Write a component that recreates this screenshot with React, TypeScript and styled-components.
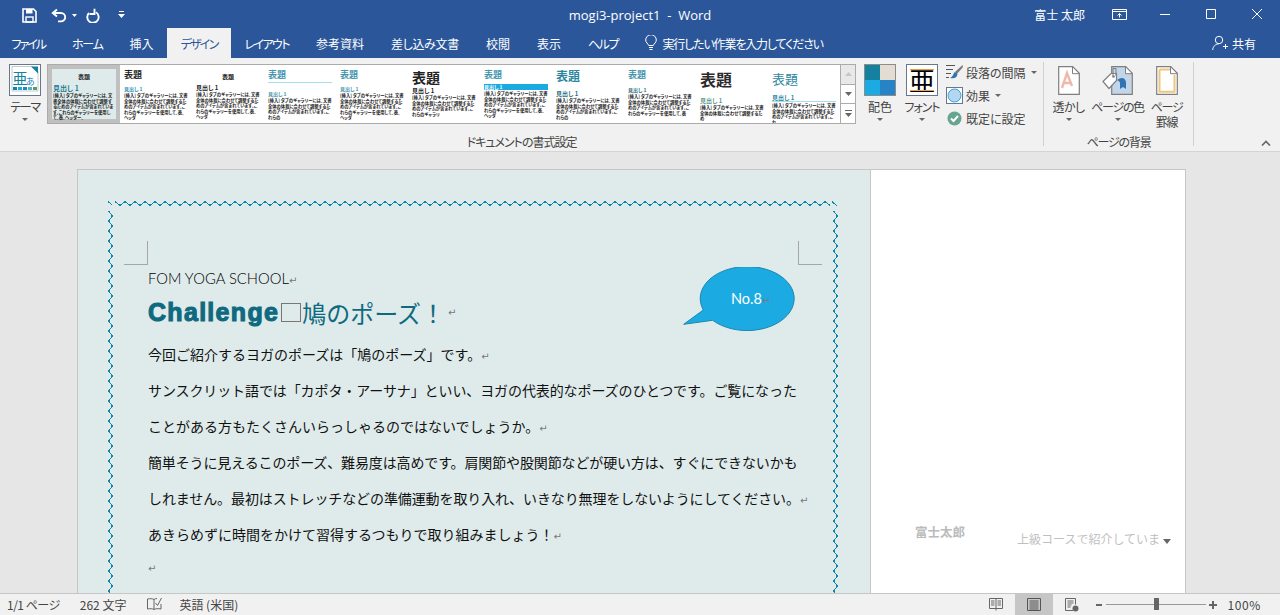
import React from "react";
import styled, { createGlobalStyle } from "styled-components";

const uiFont = `"Noto Sans CJK JP", sans-serif`;
const blue = "#2b579a";
const teal = "#0f6a80";

const sampleBody =
  "[挿入] タブのギャラリーには、文書全体の体裁に合わせて調整するためのアイテムが含まれています。これらのギャラリーを使用して、表、ヘッダー、フッター、リスト、表紙や、その他の文書パーツを挿入できます。";

interface Thumb {
  titleSize: number;
  titleColor: string;
  titleWeight?: number;
  center?: boolean;
  titleRule?: boolean;
  titleTop: number;
  headColor: string;
  headSize: number;
  headGap: number;
  band?: boolean;
  headRule?: boolean;
  selected?: boolean;
  chars: number;
}

const thumbs: Thumb[] = [
  { titleSize: 6, titleColor: "#222", titleWeight: 700, center: true, titleTop: 4, headColor: "#1b7a92", headSize: 7, headGap: 4, selected: true, chars: 70 },
  { titleSize: 9, titleColor: "#222", titleWeight: 700, titleTop: 1, headColor: "#2a8fb0", headSize: 5, headGap: 6, chars: 68 },
  { titleSize: 6, titleColor: "#111", titleWeight: 700, center: true, titleTop: 4, headColor: "#222", headSize: 6, headGap: 4, chars: 68 },
  { titleSize: 9, titleColor: "#3f93ad", titleWeight: 700, titleRule: true, titleTop: 1, headColor: "#3f93ad", headSize: 5, headGap: 8, chars: 52 },
  { titleSize: 9, titleColor: "#3f93ad", titleWeight: 700, titleTop: 1, headColor: "#3f93ad", headSize: 5, headGap: 6, chars: 68 },
  { titleSize: 14, titleColor: "#222", titleWeight: 700, titleTop: 1, headColor: "#222", headSize: 6, headGap: 2, chars: 56 },
  { titleSize: 9, titleColor: "#3f93ad", titleWeight: 700, titleTop: 1, headColor: "#fff", headSize: 5, headGap: 4, band: true, chars: 68 },
  { titleSize: 12, titleColor: "#2d86a0", titleWeight: 700, titleTop: 0, headColor: "#2d6f80", headSize: 6, headGap: 8, chars: 52 },
  { titleSize: 9, titleColor: "#3f93ad", titleWeight: 700, titleTop: 1, headColor: "#2d6f80", headSize: 5, headGap: 7, chars: 64 },
  { titleSize: 16, titleColor: "#2a2a2a", titleWeight: 700, titleTop: 2, headColor: "#5b9a8c", headSize: 6, headGap: 9, chars: 34 },
  { titleSize: 13, titleColor: "#2d86a0", titleWeight: 400, titleTop: 3, headColor: "#2d86a0", headSize: 6, headGap: 8, headRule: true, chars: 50 },
];

const tabs = [
  { label: "ファイル", tight: 2 },
  { label: "ホーム", tight: 1.3 },
  { label: "挿入", tight: 0 },
  { label: "デザイン", tight: 1.75 },
  { label: "レイアウト", tight: 1.6 },
  { label: "参考資料", tight: 0 },
  { label: "差し込み文書", tight: 0.3 },
  { label: "校閲", tight: 0 },
  { label: "表示", tight: 0 },
  { label: "ヘルプ", tight: 1.5 },
];

const bodyLines = [
  { text: "今回ご紹介するヨガのポーズは「鳩のポーズ」です。", mark: true, tight: 0 },
  { text: "サンスクリット語では「カポタ・アーサナ」といい、ヨガの代表的なポーズのひとつです。ご覧になった", mark: false, tight: 0.1 },
  { text: "ことがある方もたくさんいらっしゃるのではないでしょうか。", mark: true, tight: 0 },
  { text: "簡単そうに見えるこのポーズ、難易度は高めです。肩関節や股関節などが硬い方は、すぐにできないかも", mark: false, tight: 0.13 },
  { text: "しれません。最初はストレッチなどの準備運動を取り入れ、いきなり無理をしないようにしてください。", mark: true, tight: 0.1 },
  { text: "あきらめずに時間をかけて習得するつもりで取り組みましょう！", mark: true, tight: 0 },
];

const zigzagH = (y: number) => {
  const pts: string[] = [];
  for (let x = 115; x <= 832; x += 5) pts.push(`${x},${(x - 115) % 10 === 0 ? y : y + 4}`);
  return pts.join(" ");
};
const zigzagV = (x: number) => {
  const pts: string[] = [];
  for (let y = 211; y <= 600; y += 5) pts.push(`${(y - 211) % 10 === 0 ? x : x + 4},${y}`);
  return pts.join(" ");
};

const App = () => {
  return (
    <>
      <Global />
      <Window>
        <TitleBar>
          <Qat>
            <QatIcon $gap={0} width="15" height="15" viewBox="0 0 15 15">
              <path d="M1 1h10.500L14 3.500V14H1z" fill="none" stroke="#fff" strokeWidth="1.600" />
              <rect x="4" y="1" width="6.500" height="4.500" fill="#fff" />
              <rect x="4" y="9" width="7" height="5" fill="none" stroke="#fff" strokeWidth="1.400" />
            </QatIcon>
            <QatIcon $gap={14} width="16" height="15" viewBox="0 0 16 15">
              <path d="M6 1.500 1.800 5 6 8.500" fill="none" stroke="#fff" strokeWidth="1.900" />
              <path d="M2.500 5H10a4.200 4.200 0 0 1 0 8.400H7" fill="none" stroke="#fff" strokeWidth="1.900" />
            </QatIcon>
            <QatIcon $gap={5} width="5" height="3" viewBox="0 0 5 3">
              <path d="M0 0h5L2.500 3z" fill="#fff" />
            </QatIcon>
            <QatIcon $gap={9} width="14" height="15" viewBox="0 0 14 15">
              <path d="M10 4.300A5.700 5.700 0 1 1 3 5" fill="none" stroke="#fff" strokeWidth="1.900" />
              <path d="M8.500.8v5.200H3.500" fill="none" stroke="#fff" strokeWidth="1.900" />
            </QatIcon>
            <QatIcon $gap={18} width="7" height="8" viewBox="0 0 7 8">
              <rect x="1" y="0" width="5" height="1" fill="#fff" />
              <path d="M0 3h7L3.500 7z" fill="#fff" />
            </QatIcon>
          </Qat>
          <DocTitle>mogi3-project1&nbsp; -&nbsp; Word</DocTitle>
          <WindowControls>
            <UserName>富士 太郎</UserName>
            <WindowButton>
              <svg width="15" height="12" viewBox="0 0 15 12" fill="none" stroke="#fff">
                <path d="M.5 1.500h14v10H.5zM.5 3.500h14" />
                <path d="M7.500 9.500V5.500M5.500 7.500l2-2 2 2" />
              </svg>
            </WindowButton>
            <WindowButton>
              <svg width="10" height="10" viewBox="0 0 10 10" stroke="#fff">
                <path d="M0 5.500h10" />
              </svg>
            </WindowButton>
            <WindowButton>
              <svg width="10" height="10" viewBox="0 0 10 10" fill="none" stroke="#fff">
                <path d="M.5.500h9v9h-9z" />
              </svg>
            </WindowButton>
            <WindowButton>
              <svg width="10" height="10" viewBox="0 0 10 10" stroke="#fff">
                <path d="M0 0l10 10M10 0L0 10" />
              </svg>
            </WindowButton>
          </WindowControls>
        </TitleBar>

        <TabRow>
          {tabs.map((tab) => (
            <Tab key={tab.label} $active={tab.label === "デザイン"} $tight={tab.tight}>
              {tab.label}
            </Tab>
          ))}
          <TellMe>
            <svg width="12" height="16" viewBox="0 0 12 16" fill="none" stroke="#fff">
              <path d="M3.700 10.500C3 8.500.7 7.600.7 5a5.300 5.300 0 0 1 10.600 0c0 2.600-2.300 3.500-3 5.500zM4 12.500h4M4.500 14.500h3" />
            </svg>
            <TellMeText>実行したい作業を入力してください</TellMeText>
          </TellMe>
          <Share>
            <svg width="16" height="16" viewBox="0 0 16 16" fill="none" stroke="#fff">
              <circle cx="7" cy="5" r="3.700" />
              <path d="M.7 15c.3-3.500 2.500-6 6-6M11 11.500h5M13.500 9v5" />
            </svg>
            共有
          </Share>
        </TabRow>

        <Ribbon>
          <Group $width={1043}>
            <GroupBody>
              <LargeButton $width={32} $left={9}>
                <IconSlot>
                  <svg width="32" height="32" viewBox="0 0 32 32">
                    <rect x=".5" y=".5" width="31" height="31" fill="#fff" stroke="#66788f" />
                    <path d="M3 2.500h21l5 5V27H3z" fill="#fff" stroke="#9aa" strokeWidth=".6" />
                    <path d="M22 2.500h7v7z" fill="#14819f" />
                    <text x="3.500" y="20" fontSize="15" fill="#14819f" fontFamily={uiFont}>亜</text>
                    <text x="17" y="21" fontSize="9" fill="#2583c6" fontFamily={uiFont}>あ</text>
                    <rect x="4" y="23" width="4" height="3" fill="#14819f" />
                    <rect x="9" y="23" width="4" height="3" fill="#1caae2" />
                    <rect x="14" y="23" width="4" height="3" fill="#2583c6" />
                    <rect x="19" y="23" width="4" height="3" fill="#5fb0b8" />
                    <rect x="24" y="23" width="4" height="3" fill="#5b9a6c" />
                  </svg>
                </IconSlot>
                <ButtonLabel $tight={1.3}>テーマ</ButtonLabel>
                <DropArrow />
              </LargeButton>

              <Gallery>
                <GalleryItems>
                  {thumbs.map((thumb, i) => (
                    <ThumbCell key={i} $selected={thumb.selected}>
                      <ThumbPage $selected={thumb.selected}>
                        <ThumbTitle
                          $size={thumb.titleSize}
                          $color={thumb.titleColor}
                          $weight={thumb.titleWeight}
                          $center={thumb.center}
                          $rule={thumb.titleRule}
                          $top={thumb.titleTop}
                        >
                          表題
                        </ThumbTitle>
                        <ThumbHead
                          $size={thumb.headSize}
                          $color={thumb.headColor}
                          $gap={thumb.headGap}
                          $band={thumb.band}
                          $rule={thumb.headRule}
                        >
                          見出し 1
                        </ThumbHead>
                        <ThumbBody>{sampleBody.slice(0, thumb.chars)}</ThumbBody>
                      </ThumbPage>
                    </ThumbCell>
                  ))}
                </GalleryItems>
                <GalleryScroll>
                  <ScrollButton $disabled>
                    <svg width="7" height="4" viewBox="0 0 7 4"><path d="M0 4h7L3.500 0z" fill="#c6c6c6" /></svg>
                  </ScrollButton>
                  <ScrollButton>
                    <svg width="7" height="4" viewBox="0 0 7 4"><path d="M0 0h7L3.500 4z" fill="#666" /></svg>
                  </ScrollButton>
                  <ScrollButton>
                    <svg width="7" height="7" viewBox="0 0 7 7"><path d="M0 .5h7" stroke="#666" /><path d="M0 3h7L3.500 7z" fill="#666" /></svg>
                  </ScrollButton>
                </GalleryScroll>
              </Gallery>

              <LargeButton $width={32} $left={8}>
                <IconSlot>
                  <Swatches>
                    <Swatch $color="#14819f" />
                    <Swatch $color="#e2dcd2" />
                    <Swatch $color="#1caae2" />
                    <Swatch $color="#2583c6" />
                  </Swatches>
                </IconSlot>
                <ButtonLabel>配色</ButtonLabel>
                <DropArrow />
              </LargeButton>

              <LargeButton $width={32} $left={10}>
                <IconSlot>
                  <FontTile>亜</FontTile>
                </IconSlot>
                <ButtonLabel $tight={1}>フォント</ButtonLabel>
                <DropArrow />
              </LargeButton>

              <Commands>
                <CommandRow>
                  <svg width="17" height="17" viewBox="0 0 17 17">
                    <path d="M0 1.500h9M0 5.500h7M0 9.500h5M0 13.500h3" stroke="#555" />
                    <path d="M16.500 1 9 8l2 2 6-7z" fill="#7a7a7a" />
                    <path d="M9 8c-2 1-1 4-5 6 4 1 7 0 7.500-4z" fill="#2f75b5" />
                  </svg>
                  段落の間隔
                  <MiniArrow />
                </CommandRow>
                <CommandRow>
                  <svg width="17" height="17" viewBox="0 0 17 17">
                    <rect x=".5" y=".5" width="16" height="16" fill="#fff" stroke="#66788f" />
                    <circle cx="8.500" cy="8.500" r="6.500" fill="#b4d6f0" stroke="#38a3dc" />
                  </svg>
                  効果
                  <MiniArrow />
                </CommandRow>
                <CommandRow>
                  <svg width="17" height="17" viewBox="0 0 17 17">
                    <circle cx="8.500" cy="8.500" r="7" fill="#67a591" />
                    <path d="M5 8.500l2.500 2.500L12 6" fill="none" stroke="#fff" strokeWidth="2" />
                  </svg>
                  既定に設定
                </CommandRow>
              </Commands>
            </GroupBody>
            <GroupLabel $tight={1}>ドキュメントの書式設定</GroupLabel>
          </Group>
          <Separator />
          <Group $width={149}>
            <GroupBody>
              <LargeButton $width={49}>
                <IconSlot>
                  <svg width="22" height="29" viewBox="0 0 22 29" fill="none">
                    <path d="M.7.700h14l6.600 6.600v21H.7z" fill="#fff" stroke="#7f7f7f" strokeWidth="1.200" />
                    <path d="M14.500.700v7h6.800" stroke="#7f7f7f" />
                    <path d="M4 22l5-15 5 13M6 17h7" stroke="#eeb9ad" strokeWidth="2.400" />
                  </svg>
                </IconSlot>
                <ButtonLabel $tight={0.6}>透かし</ButtonLabel>
                <DropArrow />
              </LargeButton>
              <LargeButton $width={49}>
                <IconSlot>
                  <svg width="31" height="29" viewBox="0 0 31 29" fill="none">
                    <path d="M9.700.700h14l6.600 6.600v21h-20.600z" fill="#c3d6e9" stroke="#7f7f7f" strokeWidth="1.200" />
                    <path d="M23.500.700v7h6.800z" fill="#fff" stroke="#7f7f7f" />
                    <path d="M15 14c4-3 8-3 9 2v7l-3-2-3 2v-6c0-1-1-2-3-3z" fill="#2f75b5" />
                    <path d="M1 15.500l8-8h5.500v7l-7.500 8z" fill="#fff" stroke="#7f7f7f" strokeWidth="1.200" />
                    <path d="M11 10V2.500h3V10" stroke="#7f7f7f" />
                    <circle cx="11.500" cy="10.500" r="1.300" fill="#7f7f7f" />
                  </svg>
                </IconSlot>
                <ButtonLabel $tight={1.3}>ページの色</ButtonLabel>
                <DropArrow />
              </LargeButton>
              <LargeButton $width={49}>
                <IconSlot>
                  <svg width="22" height="29" viewBox="0 0 22 29" fill="none">
                    <path d="M.7.700h14l6.600 6.600v21H.7z" fill="#fff" stroke="#7f7f7f" strokeWidth="1.200" />
                    <path d="M14.500.700v7h6.800" stroke="#7f7f7f" />
                    <path d="M3.500 3.500h10.500M3.500 3.500v22.200h15V9" stroke="#eec77f" strokeWidth="2" />
                  </svg>
                </IconSlot>
                <ButtonLabel $tight={1.3}>
                  ページ
                  <br />
                  罫線
                </ButtonLabel>
              </LargeButton>
            </GroupBody>
            <GroupLabel $tight={1.2}>ページの背景</GroupLabel>
          </Group>
          <Separator />
          <Collapse>
            <svg width="10" height="6" viewBox="0 0 10 6" fill="none" stroke="#666" strokeWidth="1.600">
              <path d="M1 5.500l4-4 4 4" />
            </svg>
          </Collapse>
        </Ribbon>

        <Workspace>
          <Page>
            <Document>
              <BorderArt width="792" height="423" viewBox="78 170 792 423">
                <g fill="none" stroke="#0f86a8" shapeRendering="crispEdges">
                  <polyline points="108,201.5 112.500,205.500" />
                  <polyline points={zigzagH(201.5)} />
                  <polyline points="832,201.5 837.500,206.500" />
                  <polyline points={zigzagV(108.5)} />
                  <polyline points={zigzagV(833.5)} />
                </g>
              </BorderArt>
              <CropMark $side="left" />
              <CropMark $side="right" />
              <Balloon>
                <svg width="116" height="68" viewBox="0 0 116 68">
                  <path
                    d="M20.300 43A47 32 0 1 1 29.700 53.300L.7 57.300Z"
                    fill="#1caae2"
                    stroke="#1b87b2"
                  />
                </svg>
                <BalloonText>
                  No.8<Return>↵</Return>
                </BalloonText>
              </Balloon>
              <SchoolLine>
                FOM YOGA SCHOOL<Return>↵</Return>
              </SchoolLine>
              <Heading>
                <HeadingLatin>Challenge</HeadingLatin>
                <Tofu />
                <HeadingJa>鳩のポーズ！</HeadingJa>
                <Return>↵</Return>
              </Heading>
              {bodyLines.map((line) => (
                <BodyLine key={line.text} $tight={line.tight}>
                  {line.text}
                  {line.mark && <Return>↵</Return>}
                </BodyLine>
              ))}
              <EmptyLine>
                <Return>↵</Return>
              </EmptyLine>
            </Document>
            <MarginPane>
              <Author>富士太郎</Author>
              <Note>
                上級コースで紹介していま
                <NoteArrow />
              </Note>
            </MarginPane>
          </Page>
        </Workspace>

        <StatusBar>
          <StatusItem $tight={0.5}>1/1 ページ</StatusItem>
          <StatusItem $left={20}>262 文字</StatusItem>
          <StatusItem $left={21}>
            <svg width="15" height="15" viewBox="0 0 15 15" fill="none" stroke="#666">
              <path d="M7 2.500C5.500 1.500 3 1.500 .5 2v10c2.500-.5 5-.5 6.500.5zM7 2.500c1-.7 2-1 3-1M7 12.500c1.500-1 4-1 7-.5V7" />
              <path d="M8.500 6l2 2.500L14.500 1" />
            </svg>
          </StatusItem>
          <StatusItem $left={17}>英語 (米国)</StatusItem>
          <ViewControls>
            <ViewButton>
              <svg width="14" height="13" viewBox="0 0 14 13" fill="none" stroke="#666">
                <path d="M.5.500h13v10h-13zM7 .5v12M2 3h3.500M2 5h3.500M2 7h3.500M8.500 3H12M8.500 5H12M8.500 7H12" />
              </svg>
            </ViewButton>
            <ViewButton $active>
              <svg width="14" height="13" viewBox="0 0 14 13" fill="none" stroke="#555">
                <path d="M.5.500h13v12H.5zM2.500 3h9M2.500 5h9M2.500 7h9M2.500 9h9M2.500 11h9" />
              </svg>
            </ViewButton>
            <ViewButton>
              <svg width="14" height="14" viewBox="0 0 14 14" fill="none" stroke="#666">
                <path d="M8 12.500H.5V.5h10v6M2.500 3h6M2.500 5h6M2.500 7h4M2.500 9h3" />
                <circle cx="10.500" cy="10.500" r="3" fill="#666" stroke="none" />
              </svg>
            </ViewButton>
            <ZoomSign $left={5} $width={6}>
              <svg width="6" height="2" viewBox="0 0 6 2"><rect width="6" height="2" fill="#666" /></svg>
            </ZoomSign>
            <ZoomTrack>
              <ZoomThumb />
            </ZoomTrack>
            <ZoomSign $left={3} $width={8}>
              <svg width="8" height="8" viewBox="0 0 8 8"><path d="M0 3h8v2H0zM3 0h2v8H3z" fill="#666" /></svg>
            </ZoomSign>
            <ZoomLevel>100%</ZoomLevel>
          </ViewControls>
        </StatusBar>
      </Window>
    </>
  );
};

const Global = createGlobalStyle`
  html, body {
    margin: 0;
    padding: 0;
    overflow: hidden;
  }
  body {
    font-family: ${uiFont};
  }
`;

const Window = styled.div`
  width: 1280px;
  height: 615px;
  display: flex;
  flex-direction: column;
  overflow: hidden;
  background: #f1f1f1;
`;

const TitleBar = styled.div`
  height: 28px;
  flex: none;
  display: grid;
  grid-template-columns: 1fr auto 1fr;
  align-items: center;
  background: ${blue};
  color: #fff;
`;

const Qat = styled.div`
  display: flex;
  align-items: center;
  padding-left: 22px;
  margin-bottom: 6px;
`;

const QatIcon = styled.svg<{ $gap: number }>`
  margin-left: ${(p) => p.$gap}px;
  flex: none;
`;

const DocTitle = styled.div`
  font-family: "Open Sans", sans-serif;
  font-size: 13px;
  margin-bottom: 6px;
  white-space: nowrap;
`;

const WindowControls = styled.div`
  display: flex;
  align-items: center;
  justify-content: flex-end;
`;

const UserName = styled.div`
  font-size: 12px;
  margin: 0 11px 8px 0;
  white-space: nowrap;
`;

const WindowButton = styled.div`
  width: 46px;
  height: 28px;
  display: flex;
  align-items: center;
  justify-content: center;
  margin-bottom: 8px;
`;

const TabRow = styled.div`
  height: 30px;
  flex: none;
  display: flex;
  margin-left: -2px;
  background: ${blue};
  font-size: 12px;
  font-feature-settings: "palt";
`;

const Tab = styled.div<{ $active?: boolean; $tight: number }>`
  padding: 0 13.5px;
  display: flex;
  align-items: center;
  white-space: nowrap;
  letter-spacing: ${(p) => -p.$tight}px;
  color: ${(p) => (p.$active ? blue : "#fff")};
  background: ${(p) => (p.$active ? "#f1f1f1" : "transparent")};
`;

const TellMe = styled.div`
  display: flex;
  align-items: center;
  gap: 5px;
  margin-left: 14px;
  color: #fff;
  white-space: nowrap;
`;

const TellMeText = styled.span`
  letter-spacing: -1.15px;
`;

const Share = styled.div`
  margin-left: auto;
  padding-right: 24px;
  display: flex;
  align-items: center;
  gap: 4px;
  color: #fff;
`;

const Ribbon = styled.div`
  height: 94px;
  flex: none;
  display: flex;
  box-sizing: border-box;
  border-bottom: 1px solid #d4d4d4;
  background: #f1f1f1;
  font-size: 12px;
  color: #444;
  font-feature-settings: "palt";
`;

const Group = styled.div<{ $width: number }>`
  width: ${(p) => p.$width}px;
  flex: none;
  display: flex;
  flex-direction: column;
`;

const GroupBody = styled.div`
  flex: 1;
  display: flex;
  align-items: flex-start;
  padding-top: 6px;
  min-height: 0;
`;

const GroupLabel = styled.div<{ $tight?: number }>`
  height: 16px;
  line-height: 16px;
  margin-bottom: 1px;
  text-align: center;
  font-size: 12px;
  letter-spacing: ${(p) => -(p.$tight ?? 0)}px;
  color: #444;
`;

const Separator = styled.div`
  width: 1px;
  flex: none;
  height: 84px;
  margin-top: 4px;
  background: #d0d0d0;
`;

const LargeButton = styled.div<{ $width: number; $left?: number }>`
  width: ${(p) => p.$width}px;
  margin-left: ${(p) => p.$left ?? 0}px;
  flex: none;
  display: flex;
  flex-direction: column;
  align-items: center;
`;

const IconSlot = styled.div`
  height: 32px;
  display: flex;
  align-items: center;
  justify-content: center;
`;

const ButtonLabel = styled.div<{ $tight?: number }>`
  margin-top: 3px;
  line-height: 15px;
  text-align: center;
  white-space: nowrap;
  letter-spacing: ${(p) => -(p.$tight ?? 0)}px;
`;

const DropArrow = styled.div`
  width: 0;
  height: 0;
  margin-top: 4px;
  border-left: 3px solid transparent;
  border-right: 3px solid transparent;
  border-top: 3px solid #666;
`;

const MiniArrow = styled(DropArrow)`
  margin: 0 0 0 2px;
`;

const Gallery = styled.div`
  width: 809px;
  height: 60px;
  flex: none;
  margin-left: 6px;
  display: flex;
  box-sizing: border-box;
  border: 1px solid #ababab;
  background: #fff;
`;

const GalleryItems = styled.div`
  flex: 1;
  display: flex;
  overflow: hidden;
  min-width: 0;
`;

const ThumbCell = styled.div<{ $selected?: boolean }>`
  width: 72px;
  flex: none;
  box-sizing: border-box;
  padding: 4px;
  overflow: hidden;
  background: ${(p) => (p.$selected ? "#c0c0c0" : "#fff")};
`;

const ThumbPage = styled.div<{ $selected?: boolean }>`
  height: 100%;
  background: ${(p) => (p.$selected ? "#dfebeb" : "#fff")};
  padding: 0 ${(p) => (p.$selected ? 1 : 0)}px;
  display: flow-root;
`;

const ThumbTitle = styled.div<{
  $size: number;
  $color: string;
  $weight?: number;
  $center?: boolean;
  $rule?: boolean;
  $top: number;
}>`
  margin-top: ${(p) => p.$top}px;
  font-size: ${(p) => p.$size}px;
  line-height: ${(p) => p.$size + 1}px;
  color: ${(p) => p.$color};
  font-weight: ${(p) => p.$weight ?? 400};
  text-align: ${(p) => (p.$center ? "center" : "left")};
  ${(p) => p.$rule && "border-bottom: 1px solid #a6dff2; padding-bottom: 2px;"}
`;

const ThumbHead = styled.div<{
  $size: number;
  $color: string;
  $gap: number;
  $band?: boolean;
  $rule?: boolean;
}>`
  margin-top: ${(p) => p.$gap}px;
  font-size: ${(p) => p.$size}px;
  line-height: ${(p) => p.$size + 1}px;
  color: ${(p) => p.$color};
  font-weight: 700;
  ${(p) => p.$band && "background: #1caae2;"}
  ${(p) => p.$rule && "border-bottom: 1px solid #a6dff2;"}
`;

const ThumbBody = styled.div`
  margin-top: 1px;
  font-size: 4.3px;
  line-height: 5.6px;
  font-weight: 700;
  color: #222;
  word-break: break-all;
`;

const GalleryScroll = styled.div`
  width: 14px;
  flex: none;
  display: flex;
  flex-direction: column;
  border-left: 1px solid #ababab;
`;

const ScrollButton = styled.div<{ $disabled?: boolean }>`
  flex: 1;
  display: flex;
  align-items: center;
  justify-content: center;
  background: ${(p) => (p.$disabled ? "#e8e8e8" : "#fff")};
  & + & {
    border-top: 1px solid #ababab;
  }
`;

const Swatches = styled.div`
  width: 32px;
  height: 32px;
  box-sizing: border-box;
  display: grid;
  grid-template-columns: 1fr 1fr;
  border: 1px solid #8c8c8c;
`;

const Swatch = styled.div<{ $color: string }>`
  background: ${(p) => p.$color};
`;

const FontTile = styled.div`
  width: 32px;
  height: 32px;
  box-sizing: border-box;
  position: relative;
  border: 1px solid #66788f;
  background: #fff;
  display: flex;
  align-items: center;
  justify-content: center;
  font-size: 26px;
  line-height: 30px;
  color: #000;
  &::before,
  &::after {
    content: "";
    position: absolute;
    left: 3px;
    width: 24px;
    height: 1px;
    background: #f0a030;
  }
  &::before {
    top: 4px;
  }
  &::after {
    bottom: 4px;
  }
`;

const Commands = styled.div`
  margin: -3px 0 0 8px;
  display: flex;
  flex-direction: column;
`;

const CommandRow = styled.div`
  height: 23px;
  display: flex;
  align-items: center;
  gap: 3px;
  white-space: nowrap;
`;

const Collapse = styled.div`
  margin: auto 0 5px 67px;
  display: flex;
`;

const Workspace = styled.div`
  flex: 1;
  min-height: 0;
  overflow: hidden;
  background: #e6e6e6;
  padding: 17px 0 0 77px;
`;

const Page = styled.div`
  width: 1109px;
  height: 520px;
  box-sizing: border-box;
  display: flex;
  border: 1px solid #c6c6c6;
  background: #fff;
`;

const Document = styled.div`
  width: 792px;
  flex: none;
  position: relative;
  box-sizing: border-box;
  padding: 99px 0 0 70px;
  background: #dfebeb;
  color: #000;
  font-family: ${uiFont};
`;

const BorderArt = styled.svg`
  position: absolute;
  left: 0;
  top: 0;
  pointer-events: none;
`;

const CropMark = styled.div<{ $side: "left" | "right" }>`
  position: absolute;
  top: 71px;
  width: 23px;
  height: 23px;
  ${(p) =>
    p.$side === "left"
      ? "left: 46px; border-right: 1px solid #a6a6a6; border-bottom: 1px solid #a6a6a6;"
      : "left: 720px; border-left: 1px solid #a6a6a6; border-bottom: 1px solid #a6a6a6;"}
`;

const Balloon = styled.div`
  position: absolute;
  left: 605px;
  top: 97px;
  width: 116px;
  height: 68px;
`;

const BalloonText = styled.div`
  position: absolute;
  left: 48px;
  top: 23px;
  font-family: "Lato", sans-serif;
  font-size: 14.5px;
  font-weight: 400;
  line-height: 18px;
  color: #fff;
  white-space: nowrap;
`;

const Return = styled.span`
  font-family: "DejaVu Sans", sans-serif;
  font-size: 10px;
  color: #777;
  font-weight: 400;
  letter-spacing: 0;
`;

const SchoolLine = styled.div`
  height: 18px;
  line-height: 18px;
  font-family: "Lato", sans-serif;
  font-size: 14.8px;
  font-weight: 300;
  white-space: nowrap;
`;

const Heading = styled.div`
  height: 36px;
  margin: 7px 0 5.5px;
  display: flex;
  align-items: center;
  color: ${teal};
  white-space: nowrap;
`;

const HeadingLatin = styled.span`
  font-family: "Liberation Sans", sans-serif;
  font-size: 25px;
  font-weight: 700;
  letter-spacing: 1.3px;
  -webkit-text-stroke: 1.1px ${teal};
`;

const Tofu = styled.span`
  width: 18px;
  height: 17px;
  margin: 0 1px 0 2px;
  flex: none;
  border: 1px solid #777;
`;

const HeadingJa = styled.span`
  font-size: 24px;
  margin-right: 3px;
`;

const BodyLine = styled.div<{ $tight: number }>`
  height: 36px;
  line-height: 36px;
  font-size: 14px;
  white-space: nowrap;
  letter-spacing: ${(p) => -p.$tight}px;
  color: #111;
`;

const EmptyLine = styled.div`
  height: 26px;
  line-height: 26px;
`;

const MarginPane = styled.div`
  flex: 1;
  box-sizing: border-box;
  display: flex;
  align-items: flex-start;
  padding-top: 354px;
  border-left: 1px solid #c6c6c6;
  background: #fff;
  font-size: 12px;
  line-height: 16px;
`;

const Author = styled.div`
  margin-left: 44px;
  font-size: 12.5px;
  font-weight: 700;
  color: #bbb;
  white-space: nowrap;
`;

const Note = styled.div`
  margin: 7px 0 0 52px;
  display: flex;
  align-items: center;
  color: #bfbfbf;
  white-space: nowrap;
`;

const NoteArrow = styled.span`
  width: 0;
  height: 0;
  margin: 4px 0 0 3px;
  border-left: 4.5px solid transparent;
  border-right: 4.5px solid transparent;
  border-top: 5px solid #666;
`;

const StatusBar = styled.div`
  height: 22px;
  flex: none;
  box-sizing: border-box;
  display: flex;
  align-items: center;
  padding-left: 7px;
  border-top: 1px solid #c6c6c6;
  background: #f1f1f1;
  font-size: 12px;
  color: #444;
  font-feature-settings: "palt";
`;

const StatusItem = styled.div<{ $left?: number; $tight?: number }>`
  margin-left: ${(p) => p.$left ?? 0}px;
  letter-spacing: ${(p) => -(p.$tight ?? 0)}px;
  display: flex;
  align-items: center;
  white-space: nowrap;
`;

const ViewControls = styled.div`
  margin-left: auto;
  height: 100%;
  display: flex;
  align-items: center;
  padding-right: 19px;
`;

const ViewButton = styled.div<{ $active?: boolean }>`
  width: 38px;
  height: 100%;
  display: flex;
  align-items: center;
  justify-content: center;
  background: ${(p) => (p.$active ? "#c6c6c6" : "transparent")};
`;

const ZoomSign = styled.div<{ $left: number; $width: number }>`
  width: ${(p) => p.$width}px;
  margin-left: ${(p) => p.$left}px;
  display: flex;
  align-items: center;
`;

const ZoomTrack = styled.div`
  width: 100px;
  height: 1px;
  margin-left: 4px;
  position: relative;
  background: #9a9a9a;
`;

const ZoomThumb = styled.div`
  position: absolute;
  left: 48px;
  top: -6px;
  width: 5px;
  height: 12px;
  background: #666;
`;

const ZoomLevel = styled.div`
  margin-left: 11px;
  letter-spacing: 0.6px;
  white-space: nowrap;
`;

export default App;
